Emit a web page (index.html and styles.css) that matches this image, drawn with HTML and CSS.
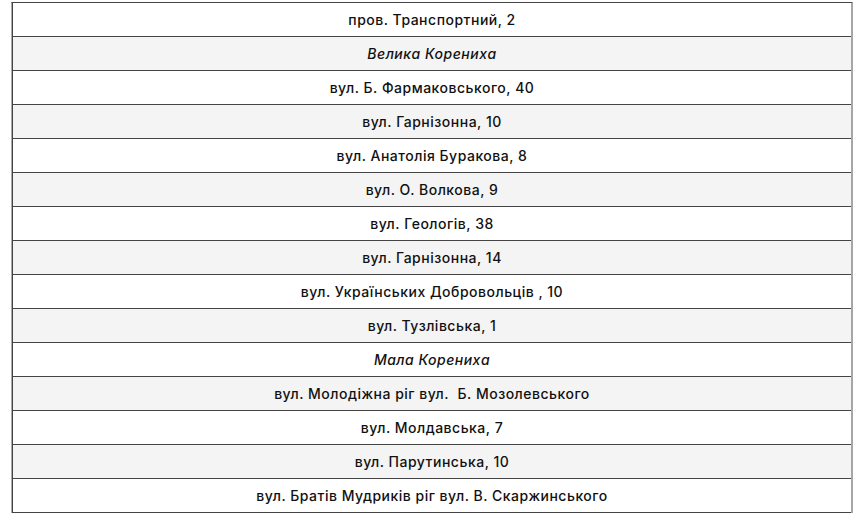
FILE: index.html
```html
<!DOCTYPE html>
<html lang="uk">
<head>
<meta charset="utf-8">
<link rel="stylesheet" href="styles.css">
</head>
<body>
<div class="list">
  <div class="row">пров. Транспортний, 2</div>
  <div class="row alt group">Велика Корениха</div>
  <div class="row">вул. Б. Фармаковського, 40</div>
  <div class="row alt">вул. Гарнізонна, 10</div>
  <div class="row">вул. Анатолія Буракова, 8</div>
  <div class="row alt">вул. О. Волкова, 9</div>
  <div class="row">вул. Геологів, 38</div>
  <div class="row alt">вул. Гарнізонна, 14</div>
  <div class="row">вул. Українських Добровольців , 10</div>
  <div class="row alt">вул. Тузлівська, 1</div>
  <div class="row group">Мала Корениха</div>
  <div class="row alt">вул. Молодіжна ріг вул.&nbsp; Б. Мозолевського</div>
  <div class="row">вул. Молдавська, 7</div>
  <div class="row alt">вул. Парутинська, 10</div>
  <div class="row">вул. Братів Мудриків ріг вул. В. Скаржинського</div>
</div>
</body>
</html>
```
FILE: styles.css
```css
html, body {
  margin: 0;
  padding: 0;
  background: #ffffff;
}
body {
  padding: 2px 0 0 11px;
  font-family: Inter, "Noto Sans", sans-serif;
}
.list {
  width: 842px;
  display: flex;
  flex-direction: column;
  border-top: 1px solid #444;
  border-left: 1px solid #aaa;
  border-right: 2px solid #a6a6a6;
  box-sizing: border-box;
}
.row {
  box-sizing: border-box;
  height: 34px;
  padding-bottom: 1px;
  border-bottom: 1px solid #444;
  border-left: 1px solid #444;
  display: flex;
  align-items: center;
  justify-content: center;
  font-size: 14px;
  font-weight: 500;
  letter-spacing: 0.5px;
  color: #111111;
  background: #ffffff;
}
.row.alt {
  background: #f4f4f4;
}
.row.group {
  font-style: italic;
}
```
